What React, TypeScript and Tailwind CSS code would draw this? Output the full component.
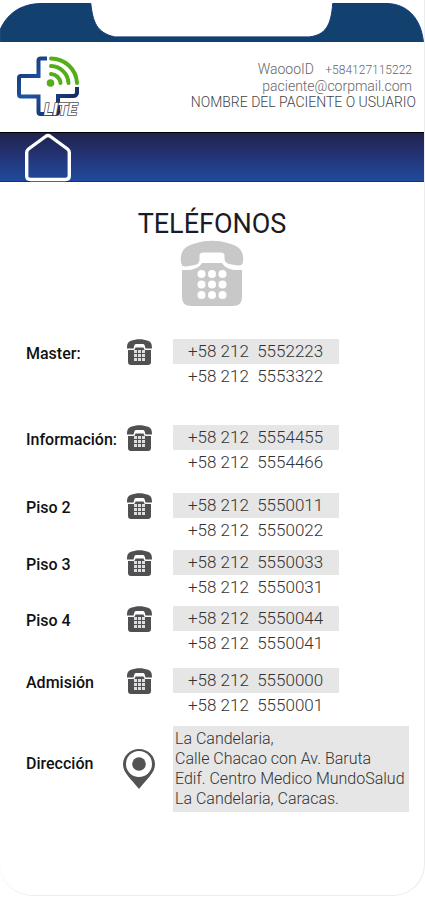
type PhoneEntry = {
  label: string;
  numbers: [string, string];
  spacing: string;
};

const entries: PhoneEntry[] = [
  { label: 'Master:', numbers: ['+58 212  5552223', '+58 212  5553322'], spacing: 'mb-9' },
  { label: 'Información:', numbers: ['+58 212  5554455', '+58 212  5554466'], spacing: 'mb-[18px]' },
  { label: 'Piso 2', numbers: ['+58 212  5550011', '+58 212  5550022'], spacing: 'mb-[7px]' },
  { label: 'Piso 3', numbers: ['+58 212  5550033', '+58 212  5550031'], spacing: 'mb-[6px]' },
  { label: 'Piso 4', numbers: ['+58 212  5550044', '+58 212  5550041'], spacing: 'mb-3' },
  { label: 'Admisión', numbers: ['+58 212  5550000', '+58 212  5550001'], spacing: 'mb-2' },
];

const telHref = (number: string) => `tel:${number.replace(/\s/g, '')}`;

function Notch() {
  return (
    <svg viewBox="0 0 425 42" className="block w-full" aria-hidden="true">
      <path
        d="M0 42V30C7 14 20 4 41 3.500H91C93 22 97 33 115 37H310C326 35 332 26 333.500 3.500H388C408 4 422 18 424.500 42Z"
        fill="#12406f"
      />
      <path
        d="M0 30C7 14 20 4 41 3.500H91C93 22 97 33 115 37H310C326 35 332 26 333.500 3.500H388C408 4 422 18 424.500 42"
        fill="none"
        stroke="#123a78"
      />
    </svg>
  );
}

function Logo() {
  return (
    <svg width="66" height="66" viewBox="0 0 66 66" role="img" aria-label="Lite">
      <defs>
        <linearGradient id="cross" x1="0" y1="0" x2="1" y2="1">
          <stop offset="0" stopColor="#17306c" />
          <stop offset="0.4" stopColor="#1d55a4" />
          <stop offset="1" stopColor="#121b50" />
        </linearGradient>
      </defs>
      <path
        d="M32 4.500H26Q23.500 4.500 23.500 6.500V22H6Q4 22 4 24V40Q4 42.500 6 42.500H23.500V58Q23.500 60 25.500 60H41Q43 60 43 58V42H58Q61.500 42 62 39V33"
        fill="none"
        stroke="url(#cross)"
        strokeWidth="4"
      />
      <g fill="none" stroke="#53ae18" strokeWidth="4" strokeLinecap="round">
        <path d="M36 4.500A26 26 0 0 1 62 29" />
        <path d="M36 12A18 18 0 0 1 53.500 29" />
        <path d="M36 20A10 10 0 0 1 45.500 29" />
      </g>
      <circle cx="35.500" cy="29" r="3.800" fill="#53ae18" />
      <text
        x="29"
        y="61"
        fontFamily="Roboto, sans-serif"
        fontSize="17"
        fontStyle="italic"
        fontWeight="700"
        fill="#fff"
        stroke="#555"
        strokeWidth="1.600"
        paintOrder="stroke"
      >
        LITE
      </text>
    </svg>
  );
}

function HomeIcon() {
  return (
    <svg width="46" height="49" viewBox="0 0 46 49" aria-hidden="true">
      <path
        d="M20.500 3.500Q23 1.500 25.500 3.500L42.500 16Q44.300 17.500 44.300 19.500V43Q44.300 46.500 40.500 46.500H5.500Q1.700 46.500 1.700 43V19.500Q1.700 17.500 3.500 16Z"
        fill="none"
        stroke="#fff"
        strokeWidth="3.400"
      />
    </svg>
  );
}

function BigPhone() {
  return (
    <svg width="64" height="66" viewBox="0 0 64 66" className="fill-[#c8c8c8]" aria-hidden="true">
      <path d="M1 22C0 13 3 7 13 4C25 -0.500 39 -0.500 51 4C61 7 64 13 63 22Q62 26 58 25.500L49 24Q45 23 44.500 19V15Q44 12.500 41 12.500H23Q20 12.500 19.500 15V20Q19 24 15 25L6 26.500Q1.500 27 1 22Z" />
      <path d="M2 30Q18 31 22 23H42Q46 31 62 30V57Q62 66 53 66H11Q2 66 2 57Z" />
      <g fill="#fff">
        {[34, 44.5, 55].map((y) =>
          [21.500, 32, 42.500].map((x) => <circle key={`${x}-${y}`} cx={x} cy={y} r="4" />),
        )}
      </g>
    </svg>
  );
}

function SmallPhone() {
  return (
    <svg width="25" height="26" viewBox="0 0 25 26" className="fill-[#505052]" aria-hidden="true">
      <path d="M0 9.500C0 5 1 3 4 1.800C9-.3 16-.3 21 1.800C24 3 25 5 25 9.500H18.500L17.500 6Q17 5 16 5H9Q8 5 7.500 6L6.500 9.500Z" />
      <path d="M1 11H6.500Q8 11 8.500 8.500H16.500Q17 11 18.500 11H24V23Q24 26 21 26H4Q1 26 1 23Z" />
      <g fill="#dedede">
        {[11, 15, 19].map((y) =>
          [7, 11, 15].map((x) => <rect key={`${x}-${y}`} x={x} y={y} width="3" height="3" />),
        )}
      </g>
    </svg>
  );
}

function PinIcon() {
  return (
    <svg width="32" height="40" viewBox="0 0 32 40" aria-hidden="true">
      <path d="M16 0A16 15.500 0 0 0 0 15.500C0 24 9 31 16 40C23 31 32 24 32 15.500A16 15.500 0 0 0 16 0Z" fill="#535355" />
      <circle cx="16" cy="15" r="13" fill="#fff" />
      <circle cx="16" cy="15" r="6.800" fill="#535355" />
    </svg>
  );
}

function PhoneRow({ label, numbers, spacing }: PhoneEntry) {
  return (
    <li className={`flex items-start ${spacing}`}>
      <h2 className="w-[101px] shrink-0 pt-[5px] text-base leading-5 font-medium">{label}</h2>
      <div className="w-[46px] shrink-0">
        <SmallPhone />
      </div>
      <div className="w-[166px] text-[17px] leading-[25px] font-light whitespace-pre text-[#333]">
        <a href={telHref(numbers[0])} className="block bg-[#e6e6e6] px-[15px]">{numbers[0]}</a>
        <a href={telHref(numbers[1])} className="block px-[15px]">{numbers[1]}</a>
      </div>
    </li>
  );
}

export default function App() {
  return (
    <div className="min-h-screen bg-white pb-1 font-[Roboto,sans-serif] text-[#111]">
      <div className="flex min-h-[calc(100vh-4px)] flex-col rounded-b-[32px] border-r border-b border-[#ececec]">
        <Notch />
        <header className="flex h-[90px] items-start justify-between pt-3 pr-2 pl-[15px]">
          <Logo />
          <div className="pt-[7px] text-right text-sm leading-4 font-light text-[#666]">
            <p className="pr-1">
              WaoooID <span className="ml-2 text-xs">+584127115222</span>
            </p>
            <p className="pr-1">paciente@corpmail.com</p>
            <p className="text-[#444]">NOMBRE DEL PACIENTE O USUARIO</p>
          </div>
        </header>
        <nav className="flex h-[50px] border-t border-b border-t-black border-b-[#142f80] bg-linear-to-b from-[#20234d] via-[#233477] to-[#1f4b9c] pl-[25px]">
          <a href="#inicio" aria-label="Inicio">
            <HomeIcon />
          </a>
        </nav>
        <main className="flex-1 pt-[26px] pb-10">
          <div className="flex flex-col items-center">
            <h1 className="text-[27px] leading-8 text-[#1b1b26]">TELÉFONOS</h1>
            <BigPhone />
          </div>
          <ul className="mt-[33px] pl-[26px]">
            {entries.map((entry) => (
              <PhoneRow key={entry.label} {...entry} />
            ))}
            <li className="flex items-start">
              <h2 className="w-[97px] shrink-0 pt-7 text-base leading-5 font-medium">Dirección</h2>
              <div className="w-[50px] shrink-0 pt-[23px]">
                <PinIcon />
              </div>
              <address className="bg-[#e6e6e6] py-[3px] pr-1 pl-[2px] text-base leading-5 font-light text-[#333] not-italic">
                La Candelaria,
                <br />
                Calle Chacao con Av. Baruta
                <br />
                Edif. Centro Medico MundoSalud
                <br />
                La Candelaria, Caracas.
              </address>
            </li>
          </ul>
        </main>
      </div>
    </div>
  );
}
